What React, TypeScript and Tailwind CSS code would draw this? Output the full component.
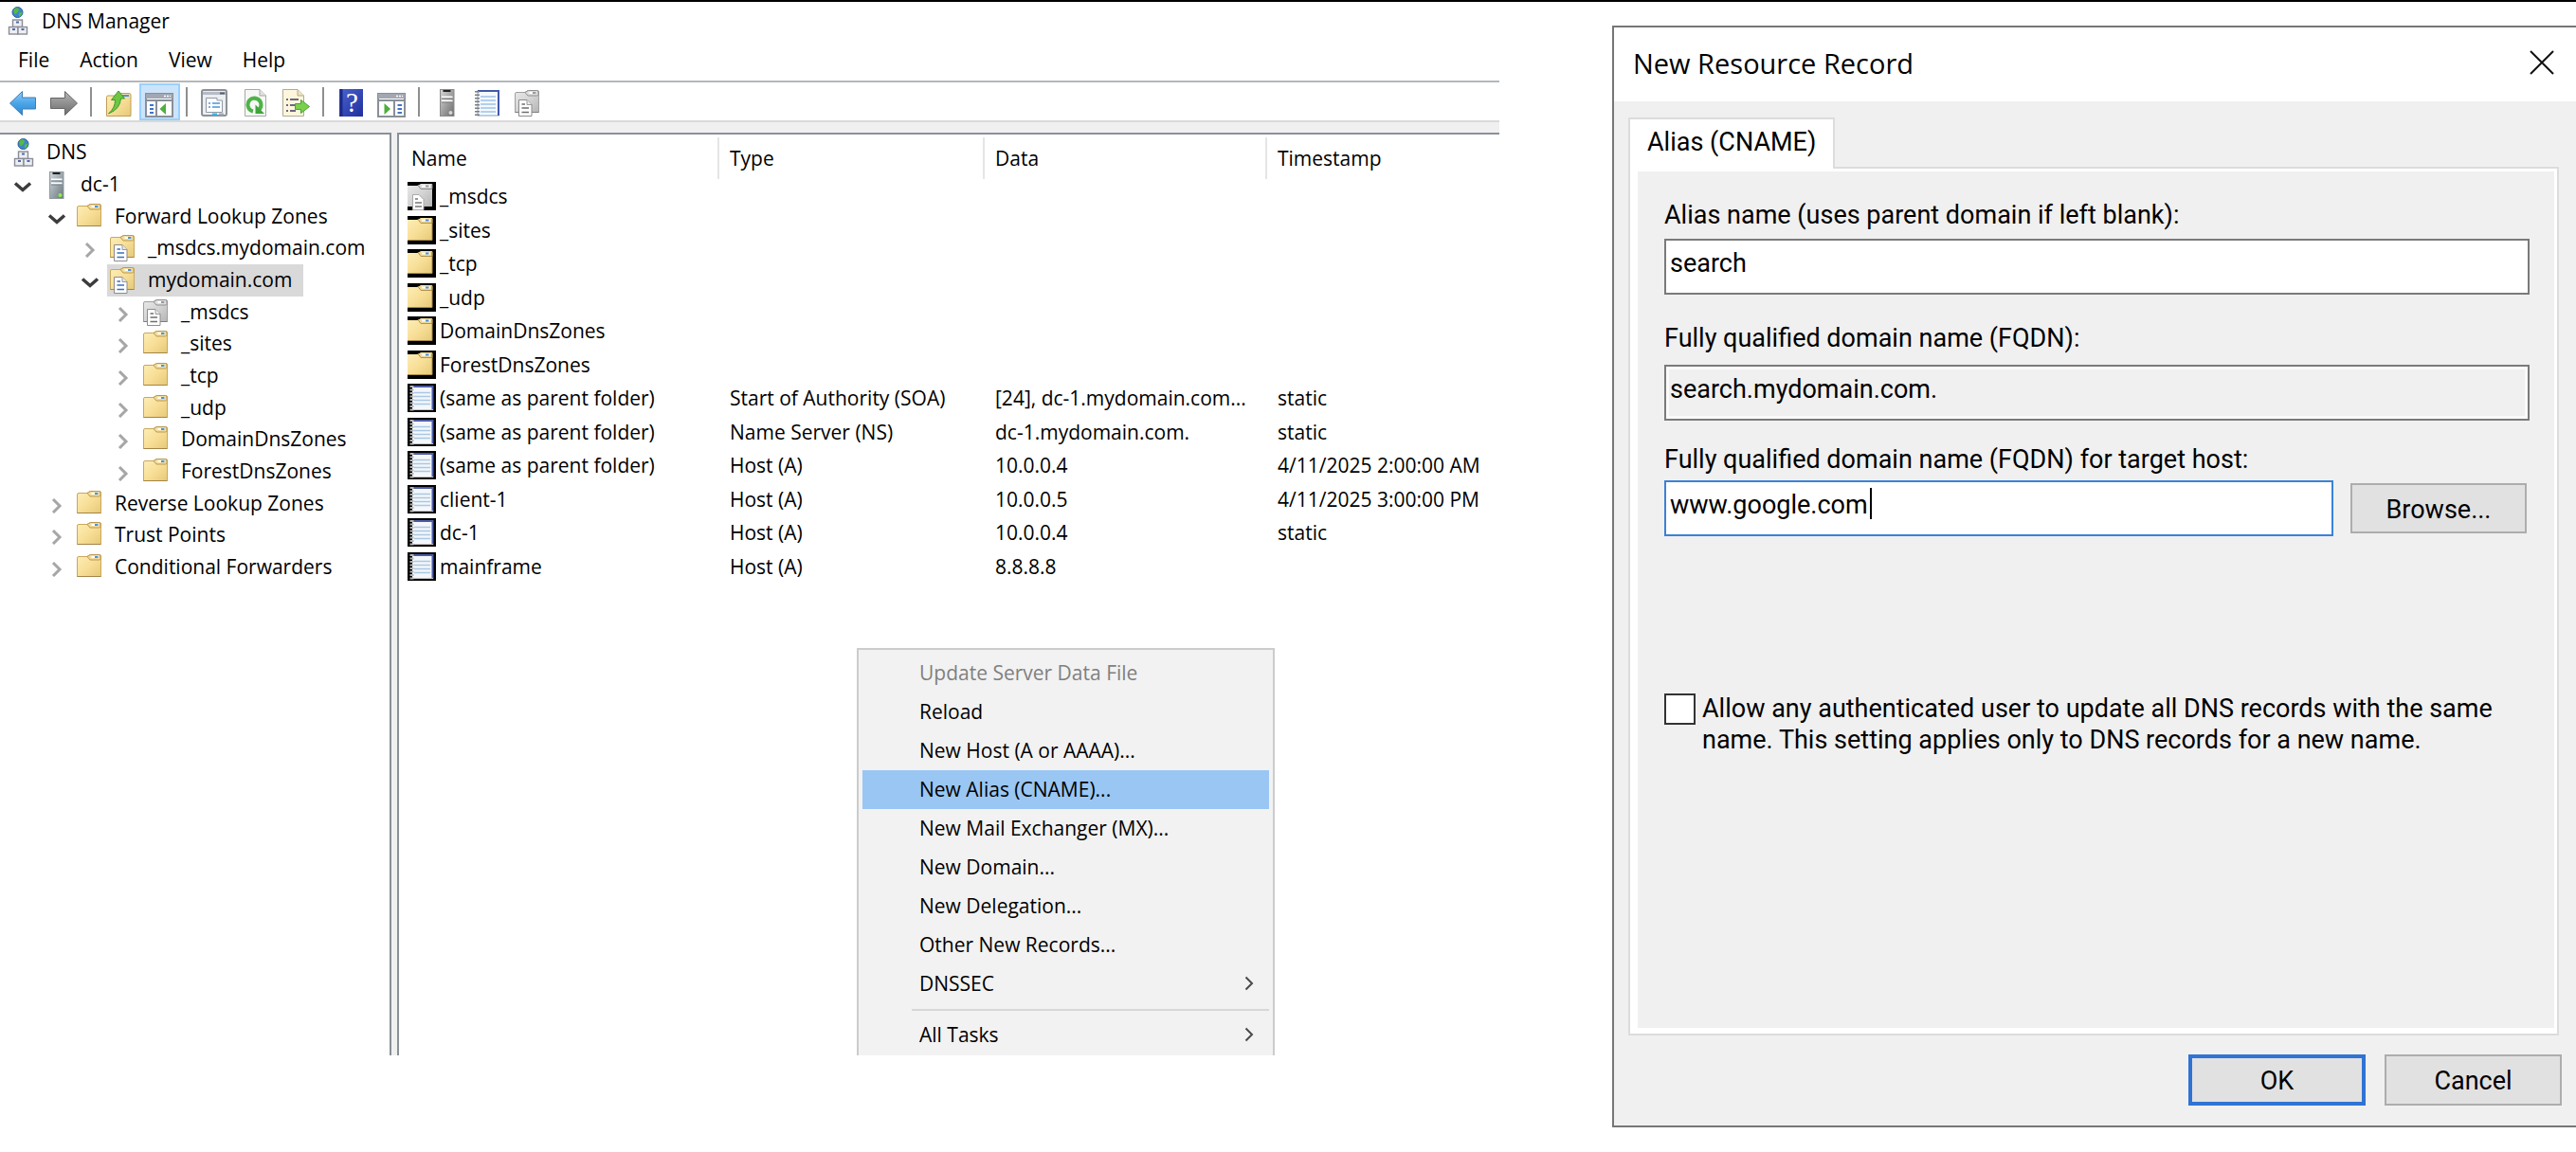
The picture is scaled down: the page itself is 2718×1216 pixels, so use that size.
import React from "react";

/* ---------- shared drawing pieces ---------- */

const Gradients = () => (
  <svg className="absolute h-0 w-0" aria-hidden="true">
    <defs>
      <linearGradient id="gold" x1="0" y1="0" x2="1" y2="1">
        <stop offset="0" stopColor="#fdeeb8" />
        <stop offset="0.5" stopColor="#f8df98" />
        <stop offset="1" stopColor="#e6c877" />
      </linearGradient>
      <linearGradient id="silver" x1="0" y1="0" x2="1" y2="1">
        <stop offset="0" stopColor="#e9e9e9" />
        <stop offset="0.5" stopColor="#d4d4d4" />
        <stop offset="1" stopColor="#b5b5b5" />
      </linearGradient>
      <linearGradient id="blueArrow" x1="0" y1="0" x2="0" y2="1">
        <stop offset="0" stopColor="#8fcdf8" />
        <stop offset="0.5" stopColor="#4ba5e8" />
        <stop offset="1" stopColor="#2f86cf" />
      </linearGradient>
      <linearGradient id="grayArrow" x1="0" y1="0" x2="0" y2="1">
        <stop offset="0" stopColor="#b4b4b4" />
        <stop offset="1" stopColor="#6c6c6c" />
      </linearGradient>
      <linearGradient id="steel" x1="0" y1="0" x2="1" y2="1">
        <stop offset="0" stopColor="#d3dadd" />
        <stop offset="1" stopColor="#68767e" />
      </linearGradient>
      <linearGradient id="graySteel" x1="0" y1="0" x2="1" y2="1">
        <stop offset="0" stopColor="#d8d8d8" />
        <stop offset="1" stopColor="#6a6a6a" />
      </linearGradient>
      <linearGradient id="helpBlue" x1="0" y1="0" x2="1" y2="1">
        <stop offset="0" stopColor="#4a63d0" />
        <stop offset="1" stopColor="#1f2f9c" />
      </linearGradient>
    </defs>
  </svg>
);

const FolderShape = ({ gray = false }: { gray?: boolean }) => (
  <g>
    <path
      d="M1.5 5Q1.5 3.5 3 3.5H12L15 1.5H25Q26.500 1.500 26.500 3V24.500H1.500Z"
      fill={gray ? "url(#silver)" : "url(#gold)"}
      stroke={gray ? "#a0a0a0" : "#c8a85e"}
    />
    <path
      d="M12 3.500L15 7H24.500Q26 7 26 5.500V3Q26 1.500 24.500 1.500H15.500Z"
      fill={gray ? "#dedede" : "#f3dc9c"}
      stroke={gray ? "#8f8f8f" : "#bb994e"}
    />
    <path d="M16.500 4H24" stroke="#fff" strokeWidth="2" />
    <path d="M20 4H23.500" stroke={gray ? "#9a9a9a" : "#4b93dc"} strokeWidth="2" />
    <path d="M1.500 24.500H26.500" stroke={gray ? "#7d7d7d" : "#a3844a"} />
  </g>
);

const PageShape = ({ gray = false }: { gray?: boolean }) => (
  <g>
    <path d="M5.500 11.500H14L19 16.500V28.500H5.500Z" fill="#fff" stroke="#8c8c8c" />
    <path d="M14 11.500V16.500H19" fill="#e8e8e8" stroke="#9a9a9a" />
    <path
      d="M8.500 16H12M8.500 20H16M8.500 24.500H16"
      stroke={gray ? "#6e6e6e" : "#3a6fbe"}
      strokeWidth="1.500"
    />
  </g>
);

const FolderIcon = () => (
  <svg viewBox="0 0 28 30" className="h-[30px] w-7 shrink-0"><FolderShape /></svg>
);
const ZoneIcon = ({ gray = false }: { gray?: boolean }) => (
  <svg viewBox="0 0 28 30" className="h-[30px] w-7 shrink-0">
    <FolderShape gray={gray} />
    <PageShape gray={gray} />
  </svg>
);

const RootIcon = () => (
  <svg viewBox="0 0 28 30" className="h-[30px] w-7 shrink-0">
    <circle cx="16.500" cy="6" r="5.500" fill="#3d86cf" stroke="#2a5f9d" />
    <path d="M13 2Q17 0 18 3Q17 7 14 8Q11.500 6 13 2ZM18 7Q21 5 21.500 6Q21 10 18 11Z" fill="#58b947" />
    <g fill="#eceef2" stroke="#8a8d96" strokeWidth="1.400">
      <rect x="11.500" y="14" width="10" height="7.500" />
      <rect x="7.500" y="21.500" width="9.500" height="7.500" />
      <rect x="17" y="21.500" width="9.500" height="7.500" />
    </g>
    <path d="M15 16.500H18M11 24H14M20.500 24H23.500" stroke="#5568a8" strokeWidth="2" />
  </svg>
);

const TowerShape = ({ gray = false }: { gray?: boolean }) => (
  <g>
    <rect x="8.500" y="1.500" width="14.500" height="28" fill={gray ? "url(#graySteel)" : "url(#steel)"} stroke={gray ? "#8b8b8b" : "#8d999f"} />
    <path d="M11.500 3H19.500" stroke="#222" strokeWidth="2" />
    <path d="M10 9.500H21.500M10 13.500H21.500" stroke="#fff" strokeWidth="2" />
    <path d="M10 11H21.500M10 15H21.500" stroke={gray ? "#777" : "#6f7f88"} />
    <circle cx="19.500" cy="26" r="2" fill={gray ? "#d5d5d5" : "#8df03c"} />
  </g>
);
const ServerIcon = () => (
  <svg viewBox="0 0 28 31" className="h-[31px] w-7 shrink-0"><TowerShape /></svg>
);

const Chevron = ({ open }: { open: boolean }) => (
  <svg viewBox="0 0 20 20" className="h-5 w-5" fill="none">
    {open ? (
      <path d="M2 8.500L10 15.500L18 8.500" stroke="#3c3c3c" strokeWidth="3.500" />
    ) : (
      <path d="M6 5L13 12L6 19" stroke="#a6a6a6" strokeWidth="3" />
    )}
  </svg>
);

const SubmenuArrow = () => (
  <svg viewBox="0 0 10 16" className="h-4 w-2.5" fill="none">
    <path d="M1.500 1.500L8 8L1.500 14.500" stroke="#4a4a4a" strokeWidth="2" />
  </svg>
);

/* Icons of the result list sit on a black square */
const ListIcon = ({ kind }: { kind: string }) => (
  <svg viewBox="0 0 30 30" className="h-[30px] w-[30px] shrink-0">
    <rect width="30" height="30" fill="#000" />
    {kind === "record" ? (
      <g>
        <rect x="5" y="3" width="22" height="25" fill="#f4f7fb" />
        <path d="M6 3H26.500V28" stroke="#4d5ca8" strokeWidth="2" fill="none" />
        <path d="M7 9.500H24M7 13.500H24M7 17.500H24M7 21.500H24" stroke="#a9c8e2" strokeWidth="1.500" />
        <path d="M4.500 2V29" stroke="#b5b5b5" strokeWidth="4" strokeDasharray="2 1.500" />
        <path d="M5 27.500H27" stroke="#c9c2c2" />
      </g>
    ) : (
      <g>
        <path d="M0 4H11L14 2H26V26H0Z" fill={kind === "zone" ? "url(#silver)" : "url(#gold)"} />
        <path d="M11 3.500L14 7.500H26V2.500" fill={kind === "zone" ? "#d5d5d5" : "#eed794"} stroke={kind === "zone" ? "#8a8a8a" : "#b4924a"} />
        <path d="M15 4.500H24" stroke="#fff" strokeWidth="2" />
        <path d="M19 4.500H22.500" stroke={kind === "zone" ? "#9a9a9a" : "#4b93dc"} strokeWidth="2" />
        {kind === "zone" && (
          <g>
            <path d="M5.500 13.500H12L17 18.500V29.500H5.500Z" fill="#fff" stroke="#aaa" />
            <path d="M8 18H11M8 22H15M8 26H15" stroke="#777" strokeWidth="1.500" />
          </g>
        )}
        {kind === "folder" && <path d="M0 25.500H26V3" stroke="#a98c4c" fill="none" />}
      </g>
    )}
  </svg>
);

/* ---------- toolbar ---------- */

const WindowPane = ({ left }: { left: boolean }) => (
  <g>
    <rect x="1" y="6" width="28" height="24" fill="#fff" stroke="#8a8f98" strokeWidth="2" />
    <rect x="1" y="6" width="28" height="5" fill="#a2a8b2" />
    <path d="M20 8.500H27" stroke="#fff" strokeWidth="1.500" strokeDasharray="2 1" />
    <path d="M2 13H28" stroke="#8a8f98" strokeWidth="2" />
    {left ? (
      <g>
        <path d="M5 18H9M5 22H9M5 26H9" stroke="#3f74c8" strokeWidth="2" />
        <path d="M12 14V30" stroke="#8a8f98" strokeWidth="2" />
        <path d="M22 16V28L15.500 22Z" fill="#4fae3c" />
      </g>
    ) : (
      <g>
        <path d="M21.500 18H26M21.500 22H26M21.500 26H26" stroke="#3f74c8" strokeWidth="2" />
        <path d="M18 14V30" stroke="#8a8f98" strokeWidth="2" />
        <path d="M7.500 16V28L14 22Z" fill="#4fae3c" />
      </g>
    )}
  </g>
);

type Tool = { label: string; active?: boolean; art: React.ReactNode } | null;

const tools: Tool[] = [
  { label: "Back", art: <path d="M1.500 16L14.500 3.500V10H28.500V22H14.500V28.500Z" fill="url(#blueArrow)" stroke="#3b7cb8" strokeLinejoin="round" /> },
  { label: "Forward", art: <path d="M29.500 16L16.500 3.500V10.500H1.500V21.500H16.500V28.500Z" fill="url(#grayArrow)" stroke="#666" strokeLinejoin="round" /> },
  null,
  {
    label: "Up one level",
    art: (
      <g>
        <path d="M2.500 9.500Q2.500 8 4 8H12L15 5.500H26Q28 5.500 28 7V29.500H2.500Z" fill="url(#gold)" stroke="#bf9e55" />
        <path d="M19 8H26" stroke="#4b93dc" strokeWidth="2" />
        <path d="M4.500 27Q11.500 21 11.500 12.500H7.500L15 3L21.500 11H17.500Q17 22 4.500 27Z" fill="#6cc644" stroke="#429a2c" strokeLinejoin="round" />
      </g>
    ),
  },
  { label: "Show or hide console tree", active: true, art: <WindowPane left /> },
  null,
  {
    label: "Properties",
    art: (
      <g>
        <rect x="2" y="2" width="26" height="27" rx="2" fill="#eceef1" stroke="#8c9197" strokeWidth="2" />
        <path d="M3 5.500H27" stroke="#b6bcc4" strokeWidth="3" />
        <path d="M21 5.500H26" stroke="#596069" strokeWidth="2" />
        <path d="M6.500 10.500H18V13H23.500V25.500H6.500Z" fill="#fff" stroke="#8e99a6" />
        <path d="M9 16H11M13 16H21M9 20H11M13 20H21" stroke="#79aee0" strokeWidth="2" />
        <path d="M13 27.500H18" stroke="#2fb8ee" strokeWidth="2" />
        <path d="M20 27.500H25" stroke="#a5abb2" strokeWidth="2" />
      </g>
    ),
  },
  {
    label: "Refresh",
    art: (
      <g>
        <path d="M4.500 1.500H20L26.500 8V29.500H4.500Z" fill="#f7f7f5" stroke="#a9a9a9" />
        <path d="M20 1.500V8H26.500" fill="#e2e2e2" stroke="#a9a9a9" />
        <path d="M13 24.500A7 7 0 1 1 19.500 22.500" fill="none" stroke="#4db347" strokeWidth="4" />
        <path d="M15.500 17.500V27H25Z" fill="#3fa43b" />
      </g>
    ),
  },
  {
    label: "Export list",
    art: (
      <g>
        <path d="M1.500 1.500H17L23.500 8V29.500H1.500Z" fill="#fdf6dc" stroke="#b3aa93" />
        <path d="M17 1.500V8H23.500" fill="#eee3c0" stroke="#b3aa93" />
        <path d="M5 12H7M5 18H7M5 24H7M9 12H18M9 18H15M9 24H15" stroke="#6c6780" strokeWidth="2" />
        <path d="M14.500 16.500H20.500V12.500L29.500 19.500L20.500 26.500V22.500H14.500Z" fill="#79d04d" stroke="#4ea033" strokeLinejoin="round" />
      </g>
    ),
  },
  null,
  {
    label: "Help",
    art: (
      <g>
        <rect x="3" y="1" width="25" height="29" fill="url(#helpBlue)" />
        <path d="M5 1V30" stroke="#1b2a86" strokeWidth="3" />
        <text x="16.500" y="25" textAnchor="middle" fontFamily="Liberation Serif, serif" fontSize="29" fill="#fff">?</text>
      </g>
    ),
  },
  { label: "Show or hide action pane", art: <WindowPane left={false} /> },
  null,
  { label: "New server", art: <TowerShape gray /> },
  {
    label: "New record",
    art: (
      <g>
        <rect x="5" y="3" width="22" height="26" fill="#f5f9fd" stroke="#8b9dc4" />
        <path d="M5 3H27V29" stroke="#3f5aa8" strokeWidth="2" fill="none" />
        <path d="M8 9H24M8 13H24M8 17H24M8 21H24M8 25H24" stroke="#9cc3e6" strokeWidth="1.500" />
        <path d="M4.500 3V29" stroke="#7d7d7d" strokeWidth="5" strokeDasharray="1.500 2" />
      </g>
    ),
  },
  { label: "New zone", art: <g transform="translate(0 1)"><FolderShape gray /><PageShape gray /></g> },
];

const Toolbar = () => (
  <div role="toolbar" aria-label="Console" className="flex h-10 items-stretch pt-px pl-[3px]">
    {tools.map((t, i) =>
      t ? (
        <button
          key={i}
          aria-label={t.label}
          className={
            t.active
              ? "flex w-[43px] items-center justify-center border-2 border-[#99d1ff] bg-[#cce4fb] pt-0.5"
              : "flex w-[43px] items-center justify-center pt-0.5"
          }
        >
          <svg viewBox="0 0 31 31" className="h-[31px] w-[31px] shrink-0">{t.art}</svg>
        </button>
      ) : (
        <div key={i} className="flex w-[15px] py-1 pl-1.5">
          <div className="w-0.5 bg-[#8f8f8f]" />
        </div>
      )
    )}
  </div>
);

/* ---------- console tree ---------- */

type Node = { text: string; level: number; icon: React.ReactNode; open?: boolean; selected?: boolean };

const nodes: Node[] = [
  { text: "DNS", level: 0, icon: <RootIcon /> },
  { text: "dc-1", level: 1, icon: <ServerIcon />, open: true },
  { text: "Forward Lookup Zones", level: 2, icon: <FolderIcon />, open: true },
  { text: "_msdcs.mydomain.com", level: 3, icon: <ZoneIcon />, open: false },
  { text: "mydomain.com", level: 3, icon: <ZoneIcon />, open: true, selected: true },
  { text: "_msdcs", level: 4, icon: <ZoneIcon gray />, open: false },
  { text: "_sites", level: 4, icon: <FolderIcon />, open: false },
  { text: "_tcp", level: 4, icon: <FolderIcon />, open: false },
  { text: "_udp", level: 4, icon: <FolderIcon />, open: false },
  { text: "DomainDnsZones", level: 4, icon: <FolderIcon />, open: false },
  { text: "ForestDnsZones", level: 4, icon: <FolderIcon />, open: false },
  { text: "Reverse Lookup Zones", level: 2, icon: <FolderIcon />, open: false },
  { text: "Trust Points", level: 2, icon: <FolderIcon />, open: false },
  { text: "Conditional Forwarders", level: 2, icon: <FolderIcon />, open: false },
];

const indents = ["pl-1.5", "pl-1", "pl-10", "pl-[75px]", "pl-[110px]"];

const Tree = () => (
  <ul role="tree" aria-label="Console tree" className="pt-0.5">
    {nodes.map((n) => (
      <li
        key={n.text + n.level}
        role="treeitem"
        aria-selected={!!n.selected}
        aria-expanded={n.open}
        className={`flex h-[34px] items-stretch nth-[3n]:h-[33px] ${indents[n.level]}`}
      >
        {n.open !== undefined && (
          <span className="flex w-[38px] items-center justify-center pl-0.5"><Chevron open={n.open} /></span>
        )}
        <span className={n.selected ? "flex items-center gap-[13px] bg-[#d9d9d9] pr-3 pl-0.5" : "flex items-center gap-[13px] pl-0.5"}>
          {n.icon}
          <span className="pb-0.5">{n.text}</span>
        </span>
      </li>
    ))}
  </ul>
);

/* ---------- result list ---------- */

const rows: [string, string, string, string, string][] = [
  ["zone", "_msdcs", "", "", ""],
  ["folder", "_sites", "", "", ""],
  ["folder", "_tcp", "", "", ""],
  ["folder", "_udp", "", "", ""],
  ["folder", "DomainDnsZones", "", "", ""],
  ["folder", "ForestDnsZones", "", "", ""],
  ["record", "(same as parent folder)", "Start of Authority (SOA)", "[24], dc-1.mydomain.com...", "static"],
  ["record", "(same as parent folder)", "Name Server (NS)", "dc-1.mydomain.com.", "static"],
  ["record", "(same as parent folder)", "Host (A)", "10.0.0.4", "4/11/2025 2:00:00 AM"],
  ["record", "client-1", "Host (A)", "10.0.0.5", "4/11/2025 3:00:00 PM"],
  ["record", "dc-1", "Host (A)", "10.0.0.4", "static"],
  ["record", "mainframe", "Host (A)", "8.8.8.8", ""],
];

const RecordTable = () => (
  <table className="w-full table-fixed text-left whitespace-nowrap">
    <colgroup>
      <col className="w-[338px]" />
      <col className="w-[280px]" />
      <col className="w-[298px]" />
      <col />
    </colgroup>
    <thead>
      <tr className="h-[47px]">
        {["Name", "Type", "Data", "Timestamp"].map((h, i) => (
          <th key={h} className="p-0 pt-0.5 font-normal">
            <div
              className={
                i === 0
                  ? "border-r-2 border-[#e5e5e5] py-2 pl-[13px]"
                  : i === 3
                    ? "py-2 pl-[11px]"
                    : "border-r-2 border-[#e5e5e5] py-2 pl-[11px]"
              }
            >
              {h}
            </div>
          </th>
        ))}
      </tr>
    </thead>
    <tbody>
      {rows.map(([kind, name, type, data, time], i) => (
        <tr key={i} className="h-[35px] odd:h-9">
          <td className="p-0 pl-[9px]">
            <span className="flex items-center gap-1"><ListIcon kind={kind} />{name}</span>
          </td>
          <td className="p-0 pl-[11px]">{type}</td>
          <td className="p-0 pl-[11px]">{data}</td>
          <td className="p-0 pl-[11px]">{time}</td>
        </tr>
      ))}
    </tbody>
  </table>
);

/* ---------- context menu ---------- */

const menuItems = [
  "Update Server Data File",
  "Reload",
  "New Host (A or AAAA)...",
  "New Alias (CNAME)...",
  "New Mail Exchanger (MX)...",
  "New Domain...",
  "New Delegation...",
  "Other New Records...",
  "DNSSEC",
  "-",
  "All Tasks",
];

const ContextMenu = () => (
  <div role="menu" className="absolute bottom-0 left-[483px] w-[441px] border-2 border-b-0 border-[#cccccc] bg-[#f2f2f2] px-1 pt-1 pb-px">
    {menuItems.map((m) =>
      m === "-" ? (
        <div key={m} role="separator" className="ml-[52px] h-[13px] pt-1.5">
          <div className="h-0.5 bg-[#d7d7d7]" />
        </div>
      ) : (
        <button
          key={m}
          role="menuitem"
          disabled={m === "Update Server Data File"}
          className={`flex h-[41px] w-full items-center justify-between pr-4 pb-0.5 pl-[60px] text-left disabled:text-[#808080] ${
            m === "New Alias (CNAME)..." ? "bg-[#9ac6f3]" : ""
          }`}
        >
          {m}
          {(m === "DNSSEC" || m === "All Tasks") && <SubmenuArrow />}
        </button>
      )
    )}
  </div>
);

const DnsManager = () => (
  <section aria-label="DNS Manager" className="min-w-0 font-['Open_Sans','Noto_Sans',sans-serif] text-[21px] leading-7 text-black">
    <header className="flex items-center gap-3.5 pt-1.5 pl-0.5">
      <span className="-my-1"><RootIcon /></span>
      <h1>DNS Manager</h1>
    </header>
    <nav aria-label="Menu" className="flex gap-8 border-b-2 border-[#b5b8bb] pt-[13px] pb-2 pl-[19px]">
      {["File", "Action", "View", "Help"].map((m) => <button key={m}>{m}</button>)}
    </nav>
    <Toolbar />
    <div className="h-[13px] border-t-2 border-[#dadada] bg-[#f0f0f0]" />
    <div className="flex min-h-[974px] gap-1.5 bg-[#f0f0f0]">
      <div className="w-[413px] shrink-0 border-t-2 border-r-2 border-[#8a9097] bg-white"><Tree /></div>
      <div className="relative min-w-0 flex-1 border-t-2 border-l-2 border-[#8a9097] bg-white">
        <RecordTable />
        <ContextMenu />
      </div>
    </div>
  </section>
);

/* ---------- dialog ---------- */

const field = "block h-[59px] w-full border-2 px-1 pt-2 pb-[15px] leading-8 outline-none";

const RecordDialog = () => (
  <section
    role="dialog"
    aria-labelledby="dialog-title"
    className="mt-[25px] min-w-0 border-y-2 border-l-2 border-[#767676] bg-[#f0f0f0] font-[Roboto,sans-serif] text-[27px] leading-8 text-black"
  >
    <header className="flex h-[78px] items-center justify-between bg-white pr-[23px] pl-5">
      <h2 id="dialog-title" className="pb-0.5 font-['Open_Sans','Noto_Sans',sans-serif] text-[29px]">New Resource Record</h2>
      <button aria-label="Close" className="pb-1">
        <svg viewBox="0 0 26 26" className="h-[26px] w-[26px]" fill="none">
          <path d="M1 1L25 25M25 1L1 25" stroke="#111" strokeWidth="2" />
        </svg>
      </button>
    </header>

    <div className="pt-[17px] pr-[18px] pl-[15px]">
      <div role="tablist" className="relative z-10 -mb-0.5 flex">
        <button role="tab" aria-selected="true" className="border-2 border-b-0 border-[#dcdcdc] bg-white px-[18px] pt-2 pb-3">
          Alias (CNAME)
        </button>
      </div>
      <div role="tabpanel" className="border-2 border-[#dcdcdc] bg-white pt-[3px] pr-[3px] pb-1.5 pl-2">
        <form className="min-h-[904px] bg-[#f0f0f0] pt-[30px] pr-[26px] pl-7" onSubmit={(e) => e.preventDefault()}>
          <label htmlFor="alias" className="mb-[9px] block">Alias name (uses parent domain if left blank):</label>
          <input id="alias" defaultValue="search" className={`${field} border-[#7a7a7a] bg-white`} />

          <label htmlFor="fqdn" className="mt-[30px] mb-3 block">Fully qualified domain name (FQDN):</label>
          <input id="fqdn" readOnly defaultValue="search.mydomain.com." className={`${field} border-[#7a7a7a] bg-[#f0f0f0] shadow-[inset_0_0_0_3px_#fafafa]`} />

          <label htmlFor="target" className="mt-[25px] mb-1.5 block">Fully qualified domain name (FQDN) for target host:</label>
          <div className="flex items-center gap-[18px] pr-[3px]">
            <div className="relative min-w-0 flex-1">
              <input id="target" defaultValue="www.google.com" className={`${field} border-[#3a82d8] bg-white`} />
              <span className="absolute top-2 left-[217px] h-[33px] w-0.5 bg-black" />
            </div>
            <button type="button" className="h-[53px] w-[186px] border-2 border-[#adadad] bg-[#e1e1e1] pt-0.5">Browse...</button>
          </div>

          <div className="mt-[166px] flex gap-[7px]">
            <input id="allow" type="checkbox" className="h-[33px] w-[33px] shrink-0 appearance-none border-2 border-[#333] bg-white" />
            <label htmlFor="allow" className="leading-[33px]">
              Allow any authenticated user to update all DNS records with the same name. This setting applies only to DNS records for a new name.
            </label>
          </div>
        </form>
      </div>
    </div>

    <footer className="flex justify-end gap-5 pt-5 pr-[15px] pb-[21px]">
      <button className="h-[54px] w-[187px] border-4 border-[#2f73d4] bg-[#e1e1e1] pt-0.5">OK</button>
      <button className="h-[54px] w-[187px] border-2 border-[#adadad] bg-[#e1e1e1] pt-0.5">Cancel</button>
    </footer>
  </section>
);

export default function App() {
  return (
    <main className="grid min-h-screen grid-cols-[1582fr_1017fr] items-start gap-x-[119px] border-t-2 border-black bg-white">
      <Gradients />
      <DnsManager />
      <RecordDialog />
    </main>
  );
}
